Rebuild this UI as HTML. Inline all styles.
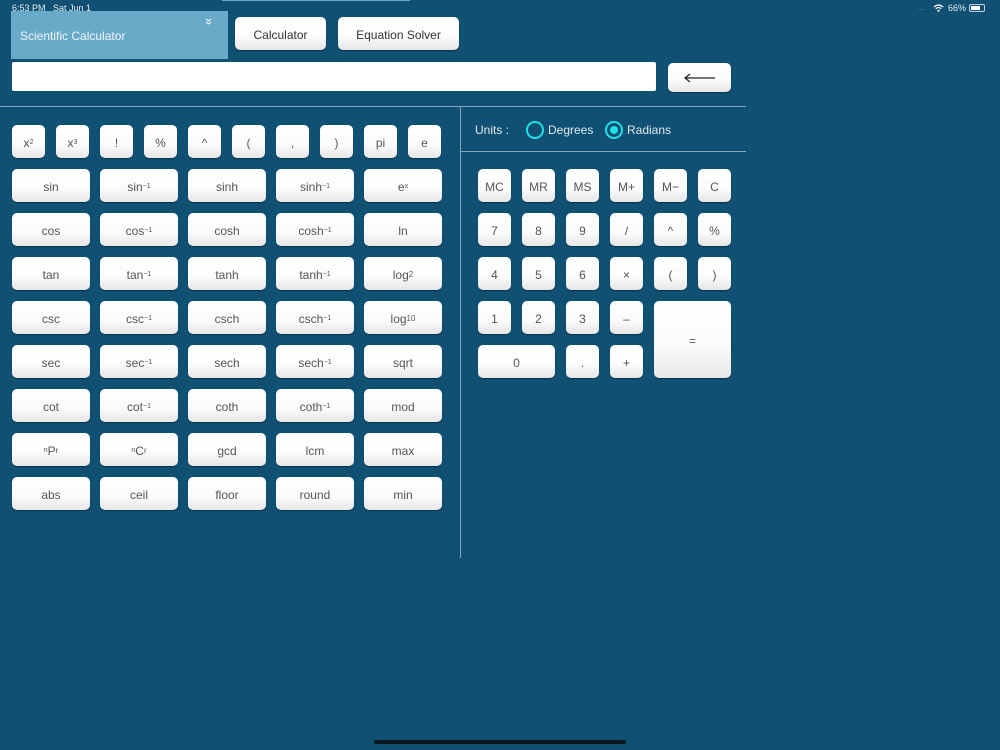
<!DOCTYPE html>
<html><head><meta charset="utf-8"><style>
body{margin:0;width:1000px;height:750px;background:#105073;position:relative;overflow:hidden;font-family:"Liberation Sans",sans-serif}
.b{position:absolute;height:33px;border-radius:5px;background:linear-gradient(#fff 0%,#fbfbfb 60%,#e6e6e6 100%);box-shadow:0 1px 1px rgba(0,0,0,.35);color:#555;font-size:12px;display:flex;align-items:center;justify-content:center;box-sizing:border-box;padding-top:2px}
.s{width:33px}.w{width:78px}
sup{font-size:7px;vertical-align:6px}
sub{font-size:8px;vertical-align:0}
.ln{position:absolute;background:#8aa6bb}
</style></head><body>
<div style="position:absolute;left:222px;top:0;width:188px;height:1px;background:#6aaac8"></div>
<div style="position:absolute;left:12px;top:3px;font-size:9px;color:#e8eef2">6:53 PM&nbsp;&nbsp;&nbsp;Sat Jun 1</div>
<div style="position:absolute;left:948px;top:3px;font-size:9px;color:#e8eef2">66%</div>
<div style="position:absolute;left:969px;top:4px;width:16px;height:8px;border:1px solid #ccd;border-radius:2px;box-sizing:border-box"><div style="width:9px;height:4px;margin:1px;background:#fff"></div></div>
<svg style="position:absolute;left:933px;top:4px" width="11" height="8" viewBox="0 0 11 8"><path d="M1 3 Q5.5 -1 10 3 M2.8 4.8 Q5.5 2.2 8.2 4.8" stroke="#fff" stroke-width="1.3" fill="none"/><circle cx="5.5" cy="6.8" r="1.1" fill="#fff"/></svg>
<div style="position:absolute;left:918px;top:6px;font-size:6px;color:#8aa">....</div>

<div style="position:absolute;left:11px;top:11px;width:217px;height:48px;background:#69aac8"><span style="position:absolute;left:9px;top:18px;color:#eef4f8;font-size:12px">Scientific Calculator</span>
<svg style="position:absolute;left:194px;top:7px" width="7" height="7" viewBox="0 0 7 7"><path d="M1 1 L3.5 3 L6 1 M1 4 L3.5 6 L6 4" stroke="#fff" stroke-width="1" fill="none"/></svg></div>
<div class="b" style="left:235px;top:17px;width:91px;font-size:12px;color:#333">Calculator</div>
<div class="b" style="left:338px;top:17px;width:121px;font-size:12px;color:#333">Equation Solver</div>
<div style="position:absolute;left:12px;top:62px;width:644px;height:29px;background:#fff;border-radius:2px"></div>
<div class="b" style="left:668px;top:63px;width:63px;height:29px;padding-top:0"><svg width="32" height="10" viewBox="0 0 32 10"><path d="M1 5 H31 M6 1 L1 5 L6 9" stroke="#222" stroke-width="1.3" fill="none"/></svg></div>

<div class="ln" style="left:0;top:106px;width:746px;height:1px"></div>
<div class="ln" style="left:460px;top:106px;width:1px;height:452px"></div>
<div class="ln" style="left:460px;top:151px;width:286px;height:1px"></div>

<div style="position:absolute;left:475px;top:123px;color:#dde8ef;font-size:12px">Units :</div>
<div style="position:absolute;left:526px;top:121px;width:14px;height:14px;border:2px solid #1ee0e8;border-radius:50%"></div>
<div style="position:absolute;left:548px;top:123px;color:#dde8ef;font-size:12px">Degrees</div>
<div style="position:absolute;left:605px;top:121px;width:14px;height:14px;border:2px solid #1ee0e8;border-radius:50%"><div style="width:8px;height:8px;margin:3px;background:#1ee0e8;border-radius:50%"></div></div>
<div style="position:absolute;left:627px;top:123px;color:#dde8ef;font-size:12px">Radians</div>

<div class="b s" style="left:12px;top:125px">x<sup>2</sup></div>
<div class="b s" style="left:56px;top:125px">x<sup>3</sup></div>
<div class="b s" style="left:100px;top:125px">!</div>
<div class="b s" style="left:144px;top:125px">%</div>
<div class="b s" style="left:188px;top:125px">^</div>
<div class="b s" style="left:232px;top:125px">(</div>
<div class="b s" style="left:276px;top:125px">,</div>
<div class="b s" style="left:320px;top:125px">)</div>
<div class="b s" style="left:364px;top:125px">pi</div>
<div class="b s" style="left:408px;top:125px">e</div>

<div class="b w" style="left:12px;top:169px">sin</div>
<div class="b w" style="left:100px;top:169px">sin<sup>−1</sup></div>
<div class="b w" style="left:188px;top:169px">sinh</div>
<div class="b w" style="left:276px;top:169px">sinh<sup>−1</sup></div>
<div class="b w" style="left:364px;top:169px">e<sup>x</sup></div>

<div class="b w" style="left:12px;top:213px">cos</div>
<div class="b w" style="left:100px;top:213px">cos<sup>−1</sup></div>
<div class="b w" style="left:188px;top:213px">cosh</div>
<div class="b w" style="left:276px;top:213px">cosh<sup>−1</sup></div>
<div class="b w" style="left:364px;top:213px">ln</div>

<div class="b w" style="left:12px;top:257px">tan</div>
<div class="b w" style="left:100px;top:257px">tan<sup>−1</sup></div>
<div class="b w" style="left:188px;top:257px">tanh</div>
<div class="b w" style="left:276px;top:257px">tanh<sup>−1</sup></div>
<div class="b w" style="left:364px;top:257px">log<sub>2</sub></div>

<div class="b w" style="left:12px;top:301px">csc</div>
<div class="b w" style="left:100px;top:301px">csc<sup>−1</sup></div>
<div class="b w" style="left:188px;top:301px">csch</div>
<div class="b w" style="left:276px;top:301px">csch<sup>−1</sup></div>
<div class="b w" style="left:364px;top:301px">log<sub>10</sub></div>

<div class="b w" style="left:12px;top:345px">sec</div>
<div class="b w" style="left:100px;top:345px">sec<sup>−1</sup></div>
<div class="b w" style="left:188px;top:345px">sech</div>
<div class="b w" style="left:276px;top:345px">sech<sup>−1</sup></div>
<div class="b w" style="left:364px;top:345px">sqrt</div>

<div class="b w" style="left:12px;top:389px">cot</div>
<div class="b w" style="left:100px;top:389px">cot<sup>−1</sup></div>
<div class="b w" style="left:188px;top:389px">coth</div>
<div class="b w" style="left:276px;top:389px">coth<sup>−1</sup></div>
<div class="b w" style="left:364px;top:389px">mod</div>

<div class="b w" style="left:12px;top:433px"><sup>n</sup>P<sub>r</sub></div>
<div class="b w" style="left:100px;top:433px"><sup>n</sup>C<sub>r</sub></div>
<div class="b w" style="left:188px;top:433px">gcd</div>
<div class="b w" style="left:276px;top:433px">lcm</div>
<div class="b w" style="left:364px;top:433px">max</div>

<div class="b w" style="left:12px;top:477px">abs</div>
<div class="b w" style="left:100px;top:477px">ceil</div>
<div class="b w" style="left:188px;top:477px">floor</div>
<div class="b w" style="left:276px;top:477px">round</div>
<div class="b w" style="left:364px;top:477px">min</div>

<div class="b s" style="left:478px;top:169px">MC</div>
<div class="b s" style="left:522px;top:169px">MR</div>
<div class="b s" style="left:566px;top:169px">MS</div>
<div class="b s" style="left:610px;top:169px">M+</div>
<div class="b s" style="left:654px;top:169px">M−</div>
<div class="b s" style="left:698px;top:169px">C</div>

<div class="b s" style="left:478px;top:213px">7</div>
<div class="b s" style="left:522px;top:213px">8</div>
<div class="b s" style="left:566px;top:213px">9</div>
<div class="b s" style="left:610px;top:213px">/</div>
<div class="b s" style="left:654px;top:213px">^</div>
<div class="b s" style="left:698px;top:213px">%</div>

<div class="b s" style="left:478px;top:257px">4</div>
<div class="b s" style="left:522px;top:257px">5</div>
<div class="b s" style="left:566px;top:257px">6</div>
<div class="b s" style="left:610px;top:257px">×</div>
<div class="b s" style="left:654px;top:257px">(</div>
<div class="b s" style="left:698px;top:257px">)</div>

<div class="b s" style="left:478px;top:301px">1</div>
<div class="b s" style="left:522px;top:301px">2</div>
<div class="b s" style="left:566px;top:301px">3</div>
<div class="b s" style="left:610px;top:301px">–</div>
<div class="b" style="left:654px;top:301px;width:77px;height:77px">=</div>

<div class="b" style="left:478px;top:345px;width:77px">0</div>
<div class="b s" style="left:566px;top:345px">.</div>
<div class="b s" style="left:610px;top:345px">+</div>

<div style="position:absolute;left:374px;top:740px;width:252px;height:4px;border-radius:2px;background:#0b1620"></div>
</body></html>
